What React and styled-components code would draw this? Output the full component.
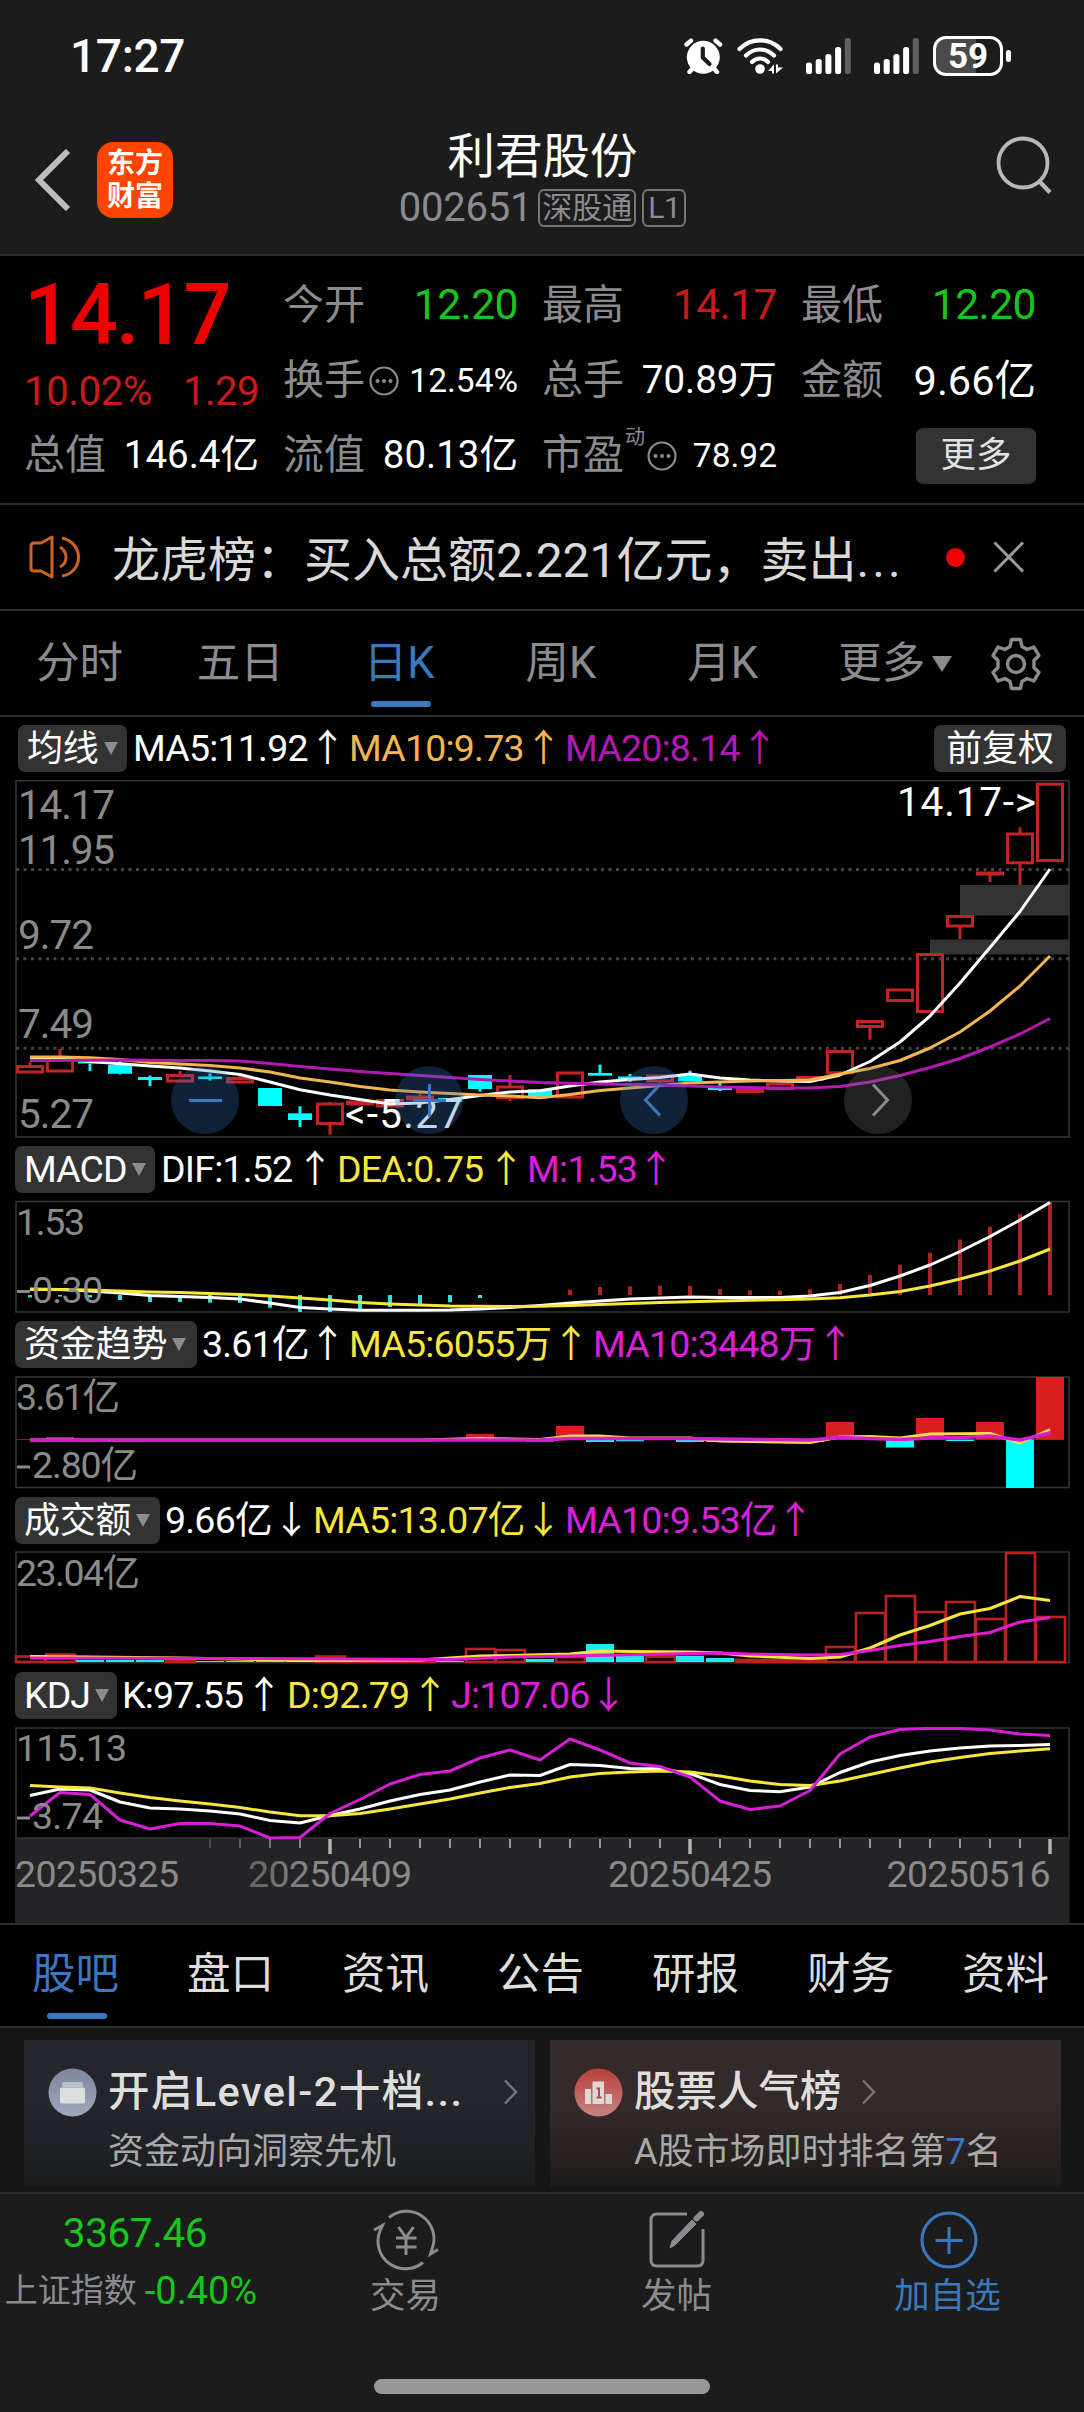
import React from "react";
import styled, { createGlobalStyle } from "styled-components";

const GlobalStyle = createGlobalStyle`
  * {
    box-sizing: border-box;
  }
  body {
    margin: 0;
    background: #000;
    font-family: Roboto, "Noto Sans CJK SC", sans-serif;
    line-height: 1;
  }
  svg {
    display: block;
  }
`;

const red = "#c8191c";
const green = "#14c81b";
const grey = "#8b8b90";
const blue = "#3a78c0";
const yellow = "#f7e73c";
const pink = "#dc1edc";

const Page = styled.div`
  width: 1084px;
  height: 2412px;
  overflow: hidden;
  background: #000;
`;

const Text = styled.span`
  color: ${(p) => p.$color || "#fff"};
  font-size: ${(p) => p.$size}px;
  font-weight: ${(p) => p.$weight || 400};
  letter-spacing: ${(p) => p.$ls || 0}px;
  white-space: nowrap;
`;

/* status bar */

const StatusBar = styled.div`
  height: 112px;
  padding: 0 81px 0 70px;
  background: #1c1c1c;
  display: flex;
  align-items: center;
  justify-content: space-between;
`;

const StatusIcons = styled.div`
  display: flex;
  align-items: center;
`;

const Battery = styled.div`
  position: relative;
  width: 70px;
  height: 40px;
  margin-left: 20px;
  border: 3px solid #fff;
  border-radius: 13px;
  background: linear-gradient(90deg, #4a4a4a 62%, #1c1c1c 62%);
  display: flex;
  align-items: center;
  justify-content: center;
  &::after {
    content: "";
    position: absolute;
    right: -11px;
    top: 11px;
    width: 5px;
    height: 12px;
    border-radius: 3px;
    background: #fff;
  }
`;

function Signal({ width }) {
  const tops = [24.5, 21, 16, 9, 0];
  return (
    <svg width={width} height="36" viewBox={`0 0 ${width} 36`} overflow="visible">
      {tops.map((t, i) => (
        <rect
          key={t}
          x={i * 9.7}
          y={t}
          width="6"
          height={36 - t}
          rx="2.6"
          fill={i === 4 ? "#606060" : "#fff"}
        />
      ))}
    </svg>
  );
}

function AlarmIcon() {
  return (
    <svg width="53" height="36" viewBox="0 0 53 36">
      <circle cx="19.3" cy="19.3" r="16.5" fill="#fff" />
      <g stroke="#fff" strokeWidth="4.4" strokeLinecap="round">
        <path d="M2.5 6.5 7 2.6M36 6.5 31.5 2.6M9 30 5.5 34M29.5 30 33 34" />
      </g>
      <path
        d="M18.8 10.5V19.5L25.5 26"
        fill="none"
        stroke="#1c1c1c"
        strokeWidth="4.2"
        strokeLinecap="round"
        strokeLinejoin="round"
      />
    </svg>
  );
}

function WifiIcon() {
  return (
    <svg width="69" height="36" viewBox="0 0 69 36">
      <g fill="none" stroke="#fff" strokeWidth="4.2" strokeLinecap="round">
        <path d="M2.5 11C14-0.5 32-0.5 43.5 11" />
        <path d="M9 17.5C17 9.5 29 9.5 37 17.5" />
        <path d="M15 24C19.5 19.3 26.5 19.3 31 24" />
      </g>
      <circle cx="23" cy="31" r="4.8" fill="#fff" />
      <path d="M31 33 37 26.5V35.5H35V33ZM39 35.5V26.5H41V29.5H46Z" fill="#fff" />
    </svg>
  );
}

/* header */

const Header = styled.div`
  height: 144px;
  padding: 0 32px 0 33px;
  background: #1c1c1c;
  border-bottom: 2px solid #2d2d2e;
  display: grid;
  grid-template-columns: 1fr 300px 1fr;
`;

const HeaderLeft = styled.div`
  display: flex;
  align-items: center;
  gap: 26px;
  padding-bottom: 6px;
`;

const HeaderRight = styled.div`
  display: flex;
  justify-content: flex-end;
  padding-top: 24px;
`;

const AppLogo = styled.div`
  width: 76px;
  height: 76px;
  border-radius: 16px;
  background: #ff4400;
  color: #fff;
  font-size: 28px;
  font-weight: 700;
  line-height: 33px;
  padding-top: 5px;
  text-align: center;
`;

const Title = styled.div`
  text-align: center;
  padding-top: 22px;
`;

const Code = styled.div`
  display: flex;
  align-items: center;
  justify-content: center;
  margin-top: 6px;
  gap: 6px;
`;

const Tag = styled.span`
  height: 38px;
  padding: 0 ${(p) => p.$pad}px;
  border: 2px solid #77777a;
  border-radius: 6px;
  color: ${grey};
  font-size: 30px;
  line-height: 34px;
  letter-spacing: ${(p) => p.$ls || 0}px;
`;

/* quote */

const Quote = styled.div`
  height: 249px;
  padding: 12px 48px 0 24px;
  border-bottom: 2px solid #2d2d2e;
  display: grid;
  grid-template-columns: repeat(4, 235px);
  gap: 24px;
`;

const QuoteRow = styled.div`
  height: ${(p) => p.$height || 75}px;
  display: flex;
  align-items: center;
  justify-content: space-between;
`;

const Name = styled.div`
  display: flex;
  align-items: center;
  color: ${grey};
  font-size: 41px;
  gap: 4px;
`;

const Sup = styled.span`
  font-size: 20px;
  margin: -38px -2px 0 -3px;
`;

const MoreButton = styled.div`
  width: 120px;
  height: 56px;
  margin-left: auto;
  border-radius: 7px;
  background: #333;
  display: flex;
  align-items: center;
  justify-content: center;
`;

function Dots() {
  return (
    <svg width="30" height="30" viewBox="0 0 30 30">
      <circle cx="15" cy="15" r="13.5" fill="none" stroke={grey} strokeWidth="2.2" />
      <g fill={grey}>
        <circle cx="8.5" cy="15" r="2" />
        <circle cx="15" cy="15" r="2" />
        <circle cx="21.5" cy="15" r="2" />
      </g>
    </svg>
  );
}

/* notice */

const Notice = styled.div`
  height: 106px;
  padding-left: 29px;
  border-bottom: 2px solid #2d2d2e;
  display: flex;
  align-items: center;
`;

const NoticeText = styled.div`
  flex: none;
  width: 834px;
  margin-left: 31px;
  padding-top: 7px;
  color: #d9d9d9;
  font-size: 48px;
  white-space: nowrap;
`;

const RedDot = styled.div`
  width: 19px;
  height: 19px;
  margin-right: 28px;
  border-radius: 50%;
  background: #f00000;
`;

/* period tabs */

const Periods = styled.div`
  height: 106px;
  padding: 2px 41px 0 36px;
  border-bottom: 2px solid #2d2d2e;
  display: flex;
  align-items: center;
`;

const Period = styled.div`
  position: relative;
  width: ${(p) => p.$width}px;
  color: ${(p) => (p.$active ? blue : grey)};
  font-size: 43.5px;
  display: flex;
  align-items: center;
  gap: 7px;
`;

const Underline = styled.div`
  position: absolute;
  left: ${(p) => p.$left}px;
  bottom: ${(p) => p.$bottom}px;
  width: 60px;
  height: 6px;
  border-radius: 3px;
  background: ${blue};
`;

const Triangle = styled.i`
  width: 0;
  height: 0;
  border: ${(p) => p.$half || 7.5}px solid transparent;
  border-top: ${(p) => p.$tall || 13}px solid ${grey};
  border-bottom: 0;
`;

/* indicator rows */

const Legend = styled.div`
  height: ${(p) => p.$height}px;
  padding: ${(p) => p.$top}px 0 0 ${(p) => p.$left || 15}px;
  display: flex;
  align-items: flex-start;
`;

const Pill = styled.div`
  width: ${(p) => p.$width}px;
  height: 47px;
  padding-left: ${(p) => (p.$center ? 0 : 9)}px;
  border-radius: 7px;
  background: #333;
  color: #fff;
  font-size: ${(p) => (p.$latin ? 37.5 : 36)}px;
  letter-spacing: ${(p) => (p.$latin ? -0.9 : -0.2)}px;
  display: flex;
  align-items: center;
  justify-content: ${(p) => (p.$center ? "center" : "flex-start")};
  gap: 5px;
`;

const Value = styled.span`
  width: ${(p) => p.$width}px;
  height: 47px;
  flex: none;
  margin-left: ${(p) => p.$gap || 0}px;
  color: ${(p) => p.$color || "#fff"};
  font-size: 37.5px;
  line-height: 46px;
  letter-spacing: -0.8px;
  white-space: nowrap;
`;

const Trend = styled.span`
  margin-left: ${(p) => p.$gap || 0}px;
`;

const ChartWrap = styled.div`
  position: relative;
`;

const RoundButton = styled.div`
  position: absolute;
  left: ${(p) => p.$left}px;
  top: 287px;
  width: 68px;
  height: 68px;
  border-radius: 50%;
  background: ${(p) => (p.$muted ? "rgba(120, 120, 120, 0.28)" : "rgba(52, 117, 193, 0.29)")};
`;

function RoundIcon({ left, muted, d }) {
  return (
    <RoundButton $left={left} $muted={muted}>
      <svg width="68" height="68" viewBox="0 0 68 68">
        <path d={d} fill="none" stroke={muted ? "#8a8a8a" : blue} strokeWidth="3" />
      </svg>
    </RoundButton>
  );
}

const STEP = 30;
const cx = (i) => STEP + i * STEP;

// series given as one y per trading day
const toPoints = (ys) => ys.map((y, i) => `${cx(i)},${y}`).join(" ");

function Series({ ys, points, color, width = 3 }) {
  return (
    <polyline
      points={points || toPoints(ys)}
      fill="none"
      stroke={color}
      strokeWidth={width}
      strokeLinejoin="round"
    />
  );
}

function Frame({ top, bottom }) {
  return (
    <rect
      x="16"
      y={top}
      width="1053"
      height={bottom - top}
      fill="none"
      stroke="#363636"
      strokeWidth="1.5"
    />
  );
}

function Label({ x, y, w, size = 37.5, color = "#8a8a8a", children }) {
  return (
    <text x={x} y={y} fontSize={size} fill={color} textLength={w} lengthAdjust="spacing">
      {children}
    </text>
  );
}

// [up, bodyTop, bodyBottom, wickTop, wickBottom]
const candles = [
  [1, 1066, 1072.5, 1062.3],
  [1, 1059.5, 1071.5, 1049],
  [0, 1061, 1063.5, 1061, 1071],
  [0, 1065, 1073.7, 1061, 1074.5],
  [0, 1077, 1080, 1075.5, 1086],
  [1, 1075, 1081.5, 1071],
  [0, 1076.5, 1079, 1073.5, 1080.5],
  [1, 1078, 1082.5, 1076],
  [0, 1088, 1106],
  [0, 1113.3, 1120, 1106.3, 1127],
  [1, 1103.5, 1124, 1102, 1134.6],
  [1, 1101.5, 1104.5, 1098],
  [1, 1100, 1106.5],
  [1, 1096.5, 1099.5, 1094],
  [0, 1098, 1102],
  [0, 1075, 1089, 1075, 1091.6],
  [1, 1086.5, 1098, 1075, 1101],
  [0, 1089.5, 1096.5],
  [1, 1072.5, 1097.5],
  [0, 1073, 1075.7, 1064.7],
  [0, 1076.5, 1080, 1074, 1082],
  [1, 1075.5, 1081.5, 1075.5, 1083],
  [0, 1076, 1081.5, 1070.7],
  [0, 1087.5, 1090, 1083, 1091],
  [1, 1088.5, 1092],
  [1, 1083.5, 1089],
  [1, 1077, 1080],
  [1, 1051, 1073.3],
  [1, 1021, 1027, 1027, 1039.7],
  [1, 989.5, 1001],
  [1, 954, 1012],
  [1, 916, 926.5, 926, 939],
  [1, 872.5, 874.5, 874, 882],
  [1, 833.5, 863.3, 827.3, 885.3],
  [1, 783.7, 861],
];

const ma5 = [
  1058, 1058, 1061.5, 1063.8, 1066, 1068, 1071, 1074.5, 1082, 1089.7, 1095, 1099.5,
  1104, 1103, 1099.5, 1095.5, 1092, 1090.7, 1086, 1082, 1079.5, 1077.5, 1074, 1078,
  1080, 1081, 1081.5, 1075, 1061.5, 1042, 1016, 983, 947.5, 911.5, 869,
];
const ma10 = [
  1057, 1057, 1057.7, 1059.5, 1062.5, 1064, 1065.5, 1068, 1072, 1078, 1082, 1086.5,
  1090, 1092, 1093.5, 1095, 1096, 1097.7, 1094.5, 1090.5, 1088, 1085.5, 1083, 1082,
  1081, 1080.5, 1080, 1074, 1068.5, 1060.5, 1048, 1032, 1011, 986, 956,
];
const ma20 = [
  1060.5, 1060.4, 1060.2, 1060, 1060.2, 1060.4, 1060.6, 1061, 1063.5, 1066.5, 1069,
  1071.5, 1073.5, 1075.5, 1077.5, 1079.5, 1081, 1082.5, 1083.3, 1084, 1084.5, 1085,
  1086, 1087, 1087.6, 1088, 1088, 1086.5, 1082, 1075.5, 1067.5, 1058.5, 1047, 1034,
  1018.5,
];

function Candle({ i, data }) {
  const [up, top, bottom, wickTop = top, wickBottom = bottom] = data;
  const color = up ? "#c22426" : "#00ffff";
  const x = cx(i);
  return (
    <g stroke={color} strokeWidth="3">
      {wickTop < top && <path d={`M${x} ${wickTop}V${top}`} />}
      {wickBottom > bottom && <path d={`M${x} ${bottom}V${wickBottom}`} />}
      {up ? (
        <rect x={x - 12.5} y={top + 0.5} width="25" height={bottom - top - 1} fill="none" />
      ) : (
        <rect x={x - 12} y={top} width="24" height={bottom - top} fill={color} stroke="none" />
      )}
    </g>
  );
}

function KLine() {
  return (
    <ChartWrap>
      <svg width="1084" height="360" viewBox="0 779 1084 360">
        <Frame top={780.7} bottom={1137} />
        <g stroke="#444" strokeWidth="3" strokeDasharray="3 4.5">
          <path d="M16 869.5H1069M16 958.7H1069M16 1048.3H1069" />
        </g>
        <rect x="960" y="885" width="109" height="30.5" fill="#333" />
        <rect x="930" y="939.5" width="139" height="15" fill="#333" />
        {candles.map((c, i) => (
          <Candle key={i} i={i} data={c} />
        ))}
        <Series ys={ma5} color="#fff" />
        <Series ys={ma10} color="#f2b650" />
        <Series ys={ma20} color="#b418b4" />
        <Label x={18} y={819} w={97} size={40.5}>14.17</Label>
        <Label x={18} y={864} w={97} size={40.5}>11.95</Label>
        <Label x={18} y={949} w={76} size={40.5}>9.72</Label>
        <Label x={18} y={1038} w={76} size={40.5}>7.49</Label>
        <Label x={18} y={1127.5} w={76} size={40.5}>5.27</Label>
        <Label x={897} y={816} w={139} size={40.5} color="#fff">14.17-&gt;</Label>
        <Label x={345} y={1127.5} w={117} size={40.5} color="#fff">&lt;-5.27</Label>
      </svg>
      <RoundIcon left={171} d="M18 34.5H51" />
      <RoundIcon left={395} d="M18 34.5H51M34.5 18V51" />
      <RoundIcon left={620} d="M40 18.5 25.5 34 40 49.5" />
      <RoundIcon left={844} muted d="M29 18.5 43.5 34 29 49.5" />
    </ChartWrap>
  );
}

const macdBars = [
  1297.5, 1296.5, 1297.5, 1300, 1302, 1302, 1302.7, 1303, 1307.7, 1312, 1312, 1309.5,
  1307, 1304, 1302.3, 1298, 1295, 1295, 1289.7, 1287, 1286.3, 1285.7, 1286, 1289,
  1290.3, 1290.7, 1289.3, 1284, 1275, 1264.7, 1252.7, 1239.7, 1226.7, 1214.3, 1202,
];
const dif = [
  1289, 1289.5, 1291, 1293, 1295.5, 1296.5, 1297.5, 1299, 1303, 1307.5, 1309, 1310.3,
  1310.3, 1310.3, 1310, 1309, 1307.5, 1305.5, 1303, 1301, 1299, 1298, 1297, 1297.5,
  1297.5, 1297.5, 1296, 1292.5, 1285.5, 1276, 1265, 1251.5, 1236.5, 1220, 1202.5,
];
const dea = [
  1289.5, 1289.5, 1290, 1291, 1292, 1292.5, 1293.5, 1294.5, 1296, 1298, 1300, 1302.5,
  1304, 1305, 1306, 1306.3, 1306.5, 1306.3, 1305.5, 1304.5, 1303.5, 1302.5, 1301.7,
  1301, 1300.3, 1299.8, 1299, 1297.7, 1295, 1291.5, 1286, 1279, 1271, 1261, 1249,
];

function Macd() {
  return (
    <svg width="1084" height="113" viewBox="0 1200 1084 113">
      <Frame top={1201.5} bottom={1312} />
      {macdBars.map((y, i) => (
        <rect
          key={i}
          x={cx(i) - 2}
          y={Math.min(y, 1295)}
          width="4"
          height={Math.abs(y - 1295)}
          fill={y > 1295 ? "#30e0e0" : "#a82424"}
        />
      ))}
      <Series ys={dif} color="#fff" />
      <Series ys={dea} color={yellow} />
      <Label x={16} y={1235} w={69}>1.53</Label>
      <Label x={32} y={1303} w={71}>0.30</Label>
      <path d="M17 1291.5H30" stroke="#8a8a8a" strokeWidth="3" />
    </svg>
  );
}

// [day index, bar edge]
const fundBars = [
  [1, 1437], [15, 1434], [17, 1441.5], [18, 1426], [19, 1442], [20, 1441.3], [21, 1437],
  [22, 1442], [23, 1442], [24, 1441.5], [25, 1441], [26, 1442], [27, 1422], [29, 1447.5],
  [30, 1418], [31, 1441], [32, 1422], [33, 1488], [34, 1377],
];

function Funds() {
  return (
    <svg width="1084" height="113" viewBox="0 1376 1084 113">
      <Frame top={1377} bottom={1487.5} />
      <path d="M16 1439.5H1064" stroke="#7a2020" />
      {fundBars.map(([i, y]) => (
        <rect
          key={i}
          x={cx(i) - 14}
          y={Math.min(y, 1439.7)}
          width="28"
          height={Math.abs(y - 1439.7)}
          fill={y > 1439.7 ? "#00ffff" : "#d81e1e"}
        />
      ))}
      <Series
        color="#fbdc50"
        points="30,1440 420,1440 480,1438.5 540,1439.5 570,1436 600,1436 630,1438 690,1438 720,1441 810,1442.5 840,1437 870,1436.5 900,1438 930,1434 990,1433.5 1020,1443 1050,1429.5"
      />
      <Series
        color="#d51ed0"
        width={3.6}
        points="30,1440 480,1440 540,1440 570,1438.5 690,1438.5 720,1439 810,1440 840,1437.5 900,1439.5 930,1438 960,1437.5 990,1436 1020,1440 1050,1433"
      />
      <Label x={16} y={1410} w={104}>3.61亿</Label>
      <Label x={32} y={1478} w={106}>2.80亿</Label>
      <path d="M17 1467H30" stroke="#8a8a8a" strokeWidth="3" />
    </svg>
  );
}

// [up, top]
const amounts = [
  [1, 1656.5], [1, 1654.5], [0, 1660], [0, 1660], [0, 1660], [1, 1660], [0, 1661],
  [0, 1661], [0, 1661], [0, 1661], [1, 1656.5], [1, 1660.5], [1, 1660.5], [1, 1660.5],
  [0, 1661], [1, 1649], [1, 1650], [0, 1659], [1, 1657], [0, 1644], [0, 1655.7],
  [1, 1656.5], [0, 1655.7], [0, 1658], [1, 1660], [1, 1660], [1, 1660.5], [1, 1647],
  [1, 1613], [1, 1596], [1, 1612], [1, 1602], [1, 1619], [1, 1553], [1, 1617],
];

function Amount() {
  return (
    <svg width="1084" height="113" viewBox="0 1551 1084 113">
      <Frame top={1552} bottom={1662.7} />
      {amounts.map(([up, y], i) =>
        up ? (
          <rect
            key={i}
            x={cx(i) - 14}
            y={y}
            width="29"
            height={1662 - y}
            fill="none"
            stroke="#b92224"
            strokeWidth="2.6"
          />
        ) : (
          <rect key={i} x={cx(i) - 14} y={y} width="28" height={1662 - y} fill="#1cebf0" />
        )
      )}
      <Series
        color={yellow}
        points="30,1656.5 90,1657 180,1658 300,1660.5 420,1660 450,1658 480,1656 510,1655.5 570,1654 600,1651 630,1651.5 690,1652 720,1653 750,1656 810,1658.5 840,1657 870,1648 900,1635 930,1625.5 960,1614 990,1608.5 1020,1596.5 1050,1600.5"
      />
      <Series
        color="#e619d2"
        points="30,1658 240,1658.5 450,1659.5 510,1657 570,1656 690,1653.5 720,1653 750,1654 810,1655 840,1654.5 870,1650.5 900,1645.5 930,1641.5 960,1636.5 990,1632.5 1020,1622 1050,1617.5"
      />
      <Label x={16} y={1585.5} w={124}>23.04亿</Label>
    </svg>
  );
}

const kLine = [
  1795.5, 1789, 1790, 1802, 1808, 1809, 1811, 1814, 1820.5, 1823, 1815.5, 1809, 1801,
  1794.5, 1790, 1782, 1775, 1775.5, 1764.5, 1765.5, 1768.5, 1768.8, 1773.5, 1784.5,
  1790.5, 1791.7, 1787, 1772.5, 1762, 1755.5, 1751, 1748, 1746, 1745.5, 1744.5,
];
const dLine = [
  1785.5, 1787, 1788, 1793, 1797.5, 1801, 1804, 1807.5, 1812, 1815.7, 1815.7, 1813.5,
  1809, 1804, 1799, 1793, 1787.5, 1783.5, 1777, 1773.5, 1772, 1771, 1772, 1776, 1781,
  1784.5, 1785.5, 1781, 1774.5, 1768, 1762, 1757.5, 1753.5, 1751, 1748.7,
];
const jLine = [
  1816, 1792.5, 1794.5, 1820, 1829, 1823.5, 1823.5, 1826, 1838, 1837.5, 1813.5, 1799.5,
  1784, 1774.5, 1771, 1758, 1750, 1760, 1739, 1750, 1763, 1766.5, 1777, 1801, 1809.5,
  1806, 1790.5, 1754, 1737, 1729.5, 1728.3, 1728.5, 1730, 1734, 1735.5,
];

function Kdj() {
  const ticks = Array.from({ length: 29 }, (_, n) => n + 6);
  return (
    <svg width="1084" height="196" viewBox="0 1727 1084 196">
      <defs>
        <linearGradient id="fade" gradientUnits="userSpaceOnUse" x1="190" y1="0" x2="320" y2="0">
          <stop offset="0" stopColor="#8a8a8a" stopOpacity="0.3" />
          <stop offset="1" stopColor="#8a8a8a" />
        </linearGradient>
      </defs>
      <rect x="15" y="1838" width="1054.5" height="86" fill="#242426" />
      <rect x="16" y="1728" width="1053" height="110" fill="#000" />
      <Frame top={1728} bottom={1838} />
      <Series ys={kLine} color="#fff" />
      <Series ys={dLine} color={yellow} />
      <Series ys={jLine} color="#d51ed5" />
      <Label x={16} y={1761} w={111}>115.13</Label>
      <Label x={32} y={1829} w={71}>3.74</Label>
      <path d="M17 1818H30" stroke="#8a8a8a" strokeWidth="3" />
      {ticks.map((i) => {
        const major = i % 12 === 10;
        return (
          <rect
            key={i}
            x={cx(i) - (major ? 1.7 : 1)}
            y="1839"
            width={major ? 3.4 : 2}
            height={major ? 15 : 9}
            fill={major ? "#b4b4b4" : "#9a9a9a"}
            opacity={i < 10 ? 0.3 + (i - 6) * 0.18 : 1}
          />
        );
      })}
      <Label x={15} y={1887} w={164}>20250325</Label>
      <Label x={248} y={1887} w={164} color="url(#fade)">20250409</Label>
      <Label x={608} y={1887} w={164}>20250425</Label>
      <Label x={886.5} y={1887} w={164}>20250516</Label>
    </svg>
  );
}

/* lower part */

const InfoTabs = styled.div`
  height: 105px;
  padding-left: 32px;
  border-top: 2px solid #2d2d2e;
  border-bottom: 2px solid #2d2d2e;
  display: flex;
  align-items: center;
`;

const InfoTab = styled.div`
  position: relative;
  width: 155px;
  padding-bottom: 1px;
  flex: none;
  color: ${(p) => (p.$active ? blue : "#dedede")};
  font-size: 43.5px;
`;

const Cards = styled.div`
  height: 164px;
  padding: 12px 23px 0 24px;
  background: #161616;
  display: flex;
  gap: 15px;
`;

const Card = styled.div`
  flex: 1;
  height: 147px;
  padding: 25px 0 0 24px;
  background: ${(p) =>
    p.$warm
      ? "linear-gradient(#342a29 45%, #1f1b1b)"
      : "linear-gradient(#24262c 45%, #1b1c1f)"};
`;

const CardTitle = styled.div`
  height: 54px;
  display: flex;
  align-items: center;
  color: #dedede;
  font-size: 41.5px;
  font-weight: 500;
  white-space: nowrap;
`;

const CardName = styled.span`
  width: ${(p) => p.$width}px;
  margin-left: 11px;
  letter-spacing: ${(p) => p.$ls || 0}px;
`;

const CardSub = styled.div`
  padding: 15px 0 0 60px;
  color: #a8a8a8;
  font-size: 36px;
  white-space: nowrap;
  b {
    color: ${blue};
    font-weight: 400;
  }
`;

function Arrow() {
  return (
    <svg width="16" height="26" viewBox="0 0 16 26">
      <path d="M2 1.5 13 13 2 24.5" fill="none" stroke="#77777a" strokeWidth="2.4" />
    </svg>
  );
}

/* bottom bar */

const BottomBar = styled.div`
  height: 220px;
  border-top: 2px solid #2d2d2e;
  background: #1c1c1c;
`;

const Actions = styled.div`
  height: 185px;
  display: grid;
  grid-template-columns: 270px repeat(3, 271px);
`;

const IndexBox = styled.div`
  display: flex;
  flex-direction: column;
  align-items: center;
  padding-top: 19px;
`;

const IndexRow = styled.div`
  margin: 17px 8px 0 0;
  height: 40px;
  display: flex;
  align-items: center;
  gap: 8px;
`;

const Action = styled.div`
  display: flex;
  flex-direction: column;
  align-items: center;
  padding-top: 15px;
  color: ${(p) => p.$color || grey};
  font-size: 35.5px;
  gap: 8px;
`;

const HomeBar = styled.div`
  width: 336px;
  height: 15px;
  margin: 0 auto;
  border-radius: 8px;
  background: #999;
`;

const ActionIcon = ({ children, color = grey }) => (
  <svg width="66" height="62" viewBox="0 0 66 62" fill="none" stroke={color} strokeWidth="3">
    {children}
  </svg>
);

const infoTabs = ["股吧", "盘口", "资讯", "公告", "研报", "财务", "资料"];

function App() {
  return (
    <Page>
      <GlobalStyle />
      <StatusBar>
        <Text $size={46} $weight={500} $ls={-0.3}>17:27</Text>
        <StatusIcons>
          <AlarmIcon />
          <WifiIcon />
          <Signal width={68} />
          <Signal width={39} />
          <Battery>
            <Text $size={35} $weight={700}>59</Text>
          </Battery>
        </StatusIcons>
      </StatusBar>

      <Header>
        <HeaderLeft>
          <svg width="38" height="62" viewBox="0 0 38 62">
            <path d="M35 2 6 31 35 60" fill="none" stroke="#bdbdbd" strokeWidth="6" />
          </svg>
          <AppLogo>
            东方
            <br />
            财富
          </AppLogo>
        </HeaderLeft>
        <Title>
          <Text $size={47.5}>利君股份</Text>
          <Code>
            <Text $size={40} $color={grey} $ls={-0.2}>002651</Text>
            <Tag $pad={2}>深股通</Tag>
            <Tag $pad={4} $ls={-0.5}>L1</Tag>
          </Code>
        </Title>
        <HeaderRight>
          <svg width="56" height="60" viewBox="0 0 56 60">
            <circle cx="27" cy="27" r="24.5" fill="none" stroke="#b8b8b8" strokeWidth="3.8" />
            <path d="M43 45 54 56.5" stroke="#b8b8b8" strokeWidth="4.4" />
          </svg>
        </HeaderRight>
      </Header>

      <Quote>
        <div>
          <QuoteRow $height={97}>
            <Text $size={84.5} $weight={500} $color="#ee0000" $ls={-2}>14.17</Text>
          </QuoteRow>
          <QuoteRow $height={54}>
            <Text $size={40} $color={red} $ls={-0.3}>10.02%</Text>
            <Text $size={40} $color={red} $ls={-0.5}>1.29</Text>
          </QuoteRow>
          <QuoteRow $height={73}>
            <Name>总值</Name>
            <Text $size={38.5}>146.4亿</Text>
          </QuoteRow>
        </div>
        <div>
          <QuoteRow>
            <Name>今开</Name>
            <Text $size={42.5} $color={green} $ls={-0.5}>12.20</Text>
          </QuoteRow>
          <QuoteRow>
            <Name>
              换手
              <Dots />
            </Name>
            <Text $size={33.5}>12.54%</Text>
          </QuoteRow>
          <QuoteRow>
            <Name>流值</Name>
            <Text $size={38.5}>80.13亿</Text>
          </QuoteRow>
        </div>
        <div>
          <QuoteRow>
            <Name>最高</Name>
            <Text $size={42.5} $color={red} $ls={-0.5}>14.17</Text>
          </QuoteRow>
          <QuoteRow>
            <Name>总手</Name>
            <Text $size={38.5}>70.89万</Text>
          </QuoteRow>
          <QuoteRow>
            <Name>
              市盈
              <Sup>动</Sup>
              <Dots />
            </Name>
            <Text $size={33.5}>78.92</Text>
          </QuoteRow>
        </div>
        <div>
          <QuoteRow>
            <Name>最低</Name>
            <Text $size={42.5} $color={green} $ls={-0.5}>12.20</Text>
          </QuoteRow>
          <QuoteRow>
            <Name>金额</Name>
            <Text $size={41.5}>9.66亿</Text>
          </QuoteRow>
          <QuoteRow>
            <MoreButton>
              <Text $size={35.5} $color="#e2e2e2">更多</Text>
            </MoreButton>
          </QuoteRow>
        </div>
      </Quote>

      <Notice>
        <svg width="52" height="44" viewBox="0 0 52 44" fill="none" stroke="#cf6420" strokeWidth="3">
          <path d="M12 8 23 2V42L12 36H5C3 36 2 35 2 33V11C2 9 3 8 5 8Z" strokeLinejoin="round" />
          <path d="M31 12C39 17 39 28 31 32M33 3C55 8 55 37 33 41" />
        </svg>
        <NoticeText>
          龙虎榜：买入总额2.221亿元，卖出<Text $size={48} $color="#d9d9d9" $ls={3}>...</Text>
        </NoticeText>
        <RedDot />
        <svg width="32" height="32" viewBox="0 0 32 32">
          <path d="M1.5 1.5 30 30.5M30 1.5 1.5 30.5" stroke="#9a9a9e" strokeWidth="3" />
        </svg>
      </Notice>

      <Periods>
        <Period $width={161}>分时</Period>
        <Period $width={167}>五日</Period>
        <Period $width={162} $active>
          日K
          <Underline $left={7} $bottom={-21} />
        </Period>
        <Period $width={162}>周K</Period>
        <Period $width={151}>月K</Period>
        <Period $width={151}>
          更多
          <Triangle $half={10.5} $tall={16} />
        </Period>
        <svg width="54" height="54" viewBox="0 0 54 54" fill="none" stroke={grey} strokeWidth="3.4">
          <path
            d="M22.5 2.5H31.5L33 9.5 38 12.5 45 10 50 18.5 45 23.5V30.5L50 35.5 45 44 38 41.5 33 44.5 31.5 51.5H22.5L21 44.5 16 41.5 9 44 4 35.5 9 30.5V23.5L4 18.5 9 10 16 12.5 21 9.5Z"
            strokeLinejoin="round"
          />
          <circle cx="27" cy="27" r="8.5" />
        </svg>
      </Periods>

      <Legend $height={62} $top={8} $left={18}>
        <Pill $width={109}>
          均线
          <Triangle />
        </Pill>
        <Value $gap={6} $width={216}>
          MA5:11.92<Trend $gap={1}>↑</Trend>
        </Value>
        <Value $width={216} $color="#f2b650">
          MA10:9.73<Trend $gap={1}>↑</Trend>
        </Value>
        <Value $width={369} $color="#b418b4">
          MA20:8.14<Trend $gap={1}>↑</Trend>
        </Value>
        <Pill $width={132} $center>前复权</Pill>
      </Legend>
      <KLine />

      <Legend $height={61} $top={7}>
        <Pill $width={140} $latin>
          MACD
          <Triangle />
        </Pill>
        <Value $gap={6} $width={176}>
          DIF:1.52<Trend $gap={4}>↑</Trend>
        </Value>
        <Value $width={190} $color={yellow}>
          DEA:0.75<Trend $gap={4}>↑</Trend>
        </Value>
        <Value $width={190} $color={pink}>
          M:1.53<Trend>↑</Trend>
        </Value>
      </Legend>
      <Macd />

      <Legend $height={63} $top={8}>
        <Pill $width={182}>
          资金趋势
          <Triangle />
        </Pill>
        <Value $gap={5} $width={147}>
          3.61亿<Trend>↑</Trend>
        </Value>
        <Value $width={244} $color={yellow}>
          MA5:6055万<Trend $gap={1}>↑</Trend>
        </Value>
        <Value $width={300} $color={pink}>
          MA10:3448万<Trend $gap={1}>↑</Trend>
        </Value>
      </Legend>
      <Funds />

      <Legend $height={62} $top={8}>
        <Pill $width={145}>
          成交额
          <Triangle />
        </Pill>
        <Value $gap={5} $width={148}>
          9.66亿<Trend $gap={1}>↓</Trend>
        </Value>
        <Value $width={252} $color={yellow}>
          MA5:13.07亿<Trend>↓</Trend>
        </Value>
        <Value $width={300} $color={pink}>
          MA10:9.53亿<Trend>↑</Trend>
        </Value>
      </Legend>
      <Amount />

      <Legend $height={63} $top={8}>
        <Pill $width={102} $latin>
          KDJ
          <Triangle />
        </Pill>
        <Value $gap={5} $width={165}>
          K:97.55<Trend $gap={2}>↑</Trend>
        </Value>
        <Value $width={164} $color={yellow}>
          D:92.79<Trend $gap={2}>↑</Trend>
        </Value>
        <Value $width={200} $color={pink}>
          J:107.06<Trend>↓</Trend>
        </Value>
      </Legend>
      <Kdj />

      <InfoTabs>
        {infoTabs.map((name, i) => (
          <InfoTab key={name} $active={i === 0}>
            {name}
            {i === 0 && <Underline $left={15} $bottom={-21} />}
          </InfoTab>
        ))}
      </InfoTabs>

      <Cards>
        <Card>
          <CardTitle>
            <svg width="49" height="49" viewBox="0 0 49 49">
              <defs>
                <linearGradient id="cool" x1="0" y1="0" x2="0" y2="1">
                  <stop offset="0" stopColor="#7d879c" />
                  <stop offset="1" stopColor="#a0a8b8" />
                </linearGradient>
              </defs>
              <circle cx="24.5" cy="24.5" r="24" fill="url(#cool)" />
              <rect x="14" y="14" width="21" height="5" rx="1.5" fill="#b9bfcb" />
              <rect x="12" y="19.5" width="25" height="16" rx="1.5" fill="#dcdde0" />
            </svg>
            <CardName $width={395} $ls={1.4}>开启Level-2十档...</CardName>
            <Arrow />
          </CardTitle>
          <CardSub>资金动向洞察先机</CardSub>
        </Card>
        <Card $warm>
          <CardTitle>
            <svg width="49" height="49" viewBox="0 0 49 49">
              <defs>
                <linearGradient id="warm" x1="0" y1="0" x2="0" y2="1">
                  <stop offset="0" stopColor="#b83f3a" />
                  <stop offset="1" stopColor="#c48580" />
                </linearGradient>
              </defs>
              <circle cx="24.5" cy="24.5" r="24" fill="url(#warm)" />
              <path d="M11 21H17V36H11ZM18.5 13.5H30V36H18.5ZM31.5 26H38V36H31.5Z" fill="#dcd8d8" />
              <path d="M22.5 20.5H25V29M22.5 29.5H27.5" fill="none" stroke="#b84a46" strokeWidth="2" />
            </svg>
            <CardName $width={227}>股票人气榜</CardName>
            <Arrow />
          </CardTitle>
          <CardSub>
            A股市场即时排名第<b>7</b>名
          </CardSub>
        </Card>
      </Cards>

      <BottomBar>
        <Actions>
          <IndexBox>
            <Text $size={40.5} $color={green} $ls={-0.4}>3367.46</Text>
            <IndexRow>
              <Text $size={33} $color={grey}>上证指数</Text>
              <Text $size={38} $color={green}>-0.40%</Text>
            </IndexRow>
          </IndexBox>
          <Action>
            <ActionIcon>
              <path d="M16 8.5A27.5 27.5 0 0 1 60 37L57.5 45 65 40.5" />
              <path d="M50 53.5A27.5 27.5 0 0 1 7 22L9.5 16.5 1 21" />
              <path d="M25.5 18 33 28.5 40.5 18M33 28.5V46M23 29H43.5M23 38H43.5" />
            </ActionIcon>
            交易
          </Action>
          <Action>
            <ActionIcon>
              <path d="M43 5H13Q7 5 7 11V51Q7 57 13 57H53Q59 57 59 51V20" />
              <path d="M26 39 28 32 48 11 52 15 31 36Z" fill={grey} strokeWidth="1" />
              <path d="M52.5 9.5 57 5" strokeWidth="6" strokeLinecap="round" />
            </ActionIcon>
            发帖
          </Action>
          <Action $color={blue}>
            <ActionIcon color={blue}>
              <circle cx="34" cy="31" r="27" />
              <path d="M20.5 31.5H47.5M34 18V45" />
            </ActionIcon>
            加自选
          </Action>
        </Actions>
        <HomeBar />
      </BottomBar>
    </Page>
  );
}

export default App;
